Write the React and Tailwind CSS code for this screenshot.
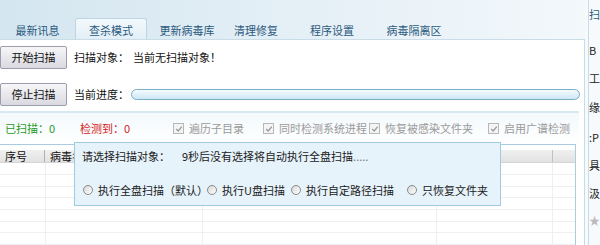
import React from 'react';

const font = { fontFamily: '"Noto Sans CJK SC", "Noto Sans", sans-serif' };

function Check({ label, className = '' }) {
  return (
    <div className={`flex items-center gap-[5px] text-[11px] text-[#9a9a9a] ${className}`}>
      <span className="w-[11px] h-[11px] border border-[#b8b8b8] bg-[#f4f4f4] flex items-center justify-center">
        <svg viewBox="0 0 10 10" className="w-[8px] h-[8px]">
          <path d="M1.5 5 L4 7.5 L8.5 2" fill="none" stroke="#9a9a9a" strokeWidth="1.6" />
        </svg>
      </span>
      <span>{label}</span>
    </div>
  );
}

function Radio({ label, className = '' }) {
  return (
    <div className={`flex items-center gap-[5px] text-[11px] text-[#1a1a1a] ${className}`}>
      <span className="w-[10px] h-[10px] rounded-full border border-[#8a8a8a] bg-gradient-to-br from-[#d8d8d8] to-white" />
      <span>{label}</span>
    </div>
  );
}

export default function App() {
  const tabs = [
    { t: '最新讯息', w: 'w-[75px]' },
    { t: '查杀模式', w: 'w-[72px]', active: true },
    { t: '更新病毒库', w: 'w-[80px]' },
    { t: '清理修复', w: 'w-[58px]' },
    { t: '程序设置', w: 'w-[94px]' },
    { t: '病毒隔离区', w: 'w-[70px]' },
  ];
  const rows = [0, 1, 2, 3, 4, 5, 6];
  return (
    <div className="w-[600px] h-[245px] overflow-hidden flex bg-white" style={font}>
      <div className="w-[587px] flex flex-col">
        {/* header with tabs */}
        <div className="h-[41px] bg-gradient-to-r from-[#d4e6f0] via-[#e4eff6] to-[#f3f8fb] flex items-end border-b border-[#c9dde8]">
          {tabs.map((tab) => (
            <div
              key={tab.t}
              className={`${tab.w} h-[21px] pt-[3px] flex items-center justify-center text-[11px] text-[#2c5a7e] ${
                tab.active ? 'bg-gradient-to-b from-[#f3f9fc] to-[#e2eff6] border border-b-0 border-[#bcd6e4] rounded-t-[3px]' : ''
              }`}
            >
              {tab.t}
            </div>
          ))}
        </div>

        {/* main panel */}
        <div className="flex-1 relative border-r border-[#c5dde9] flex flex-col">
          <div className="pt-[6px] flex flex-col gap-[14px]">
            <div className="flex items-center">
              <button className="w-[67px] h-[23px] text-[11px] text-[#111] border border-[#9d9dab] rounded-[2px] bg-gradient-to-b from-[#f7f7f9] to-[#d9d9e0]">开始扫描</button>
              <span className="ml-[7px] text-[11px] text-[#111]">扫描对象：</span>
              <span className="ml-[4px] text-[11px] text-[#111]">当前无扫描对象！</span>
            </div>
            <div className="flex items-center">
              <button className="w-[67px] h-[23px] text-[11px] text-[#111] border border-[#9d9dab] rounded-[2px] bg-gradient-to-b from-[#f7f7f9] to-[#d9d9e0]">停止扫描</button>
              <span className="ml-[7px] text-[11px] text-[#111]">当前进度：</span>
              <div className="ml-[2px] w-[449px] h-[11px] rounded-full border border-[#7aaec6] bg-gradient-to-b from-[#f4fbff] to-[#cde7f5]" />
            </div>
          </div>

          <div className="mt-[5px] w-[579px] h-[2px] bg-[#d6e8f1]" />

          {/* counts & options */}
          <div className="h-[31px] w-[579px] flex items-center bg-gradient-to-b from-[#f3f9fc] to-white">
            <span className="ml-[5px] w-[75px] text-[11px] text-[#1f9a1f]">已扫描：0</span>
            <span className="w-[93px] text-[11px] text-[#d42020]">检测到：0</span>
            <Check label="遍历子目录" className="w-[90px]" />
            <Check label="同时检测系统进程" className="w-[106px]" />
            <Check label="恢复被感染文件夹" className="w-[119px]" />
            <Check label="启用广谱检测" />
          </div>

          {/* table */}
          <div className="w-[576px] flex-1 border-t border-r border-[#a9cde0] pt-[5px]">
            <div className="h-[13px] flex bg-gradient-to-b from-[#f0f0f0] to-[#e2e2e2] border-b border-[#d4d4d4] text-[11px] text-[#111]">
              <div className="w-[45px] pl-[5px] border-r border-[#b0b0b0] leading-[13px]">序号</div>
              <div className="w-[508px] pl-[5px] border-r border-[#c0c0c0] leading-[13px]">病毒名</div>
              <div className="flex-1" />
            </div>
            {rows.map((r) => (
              <div key={r} className="h-[11.7px] flex border-b border-[#efefef]">
                <div className="w-[46px] border-r border-[#efefef]" />
                <div className="w-[157px] border-r border-[#efefef]" />
                <div className="w-[234px] border-r border-[#efefef]" />
                <div className="w-[116px] border-r border-[#efefef]" />
                <div className="flex-1" />
              </div>
            ))}
          </div>

          {/* dialog */}
          <div className="absolute left-[74px] top-[102px] w-[427px] h-[64px] bg-[#e7f3fb] border border-[#9ecbe0] flex flex-col">
            <div className="mt-[5px] ml-[7px] flex text-[11px] text-[#1a1a1a]">
              <span>请选择扫描对象：</span>
              <span className="ml-[12px]">9秒后没有选择将自动执行全盘扫描</span>
              <span className="text-[#777]">.....</span>
            </div>
            <div className="mt-[17px] ml-[8px] flex">
              <Radio label="执行全盘扫描（默认）" className="w-[124px]" />
              <Radio label="执行U盘扫描" className="w-[84px]" />
              <Radio label="执行自定路径扫描" className="w-[116px]" />
              <Radio label="只恢复文件夹" />
            </div>
          </div>
        </div>
      </div>

      {/* right strip (cut off neighbour) */}
      <div className="flex-1 flex bg-[#f6fafc]">
        <div className="w-[4px] border-r border-[#cbdbe5]" />
        <div className="flex-1 overflow-hidden text-[11px] text-[#222] leading-none">
          <div className="mt-[9px] text-[#2c5a7e]">扫</div>
          <div className="mt-[25px]">B</div>
          <div className="mt-[17px]">工</div>
          <div className="mt-[18px]">缘</div>
          <div className="mt-[19px]">:P</div>
          <div className="mt-[17px]">具</div>
          <div className="mt-[17px]">汲</div>
          <div className="mt-[16px] text-[#bbb]">★</div>
        </div>
      </div>
    </div>
  );
}
